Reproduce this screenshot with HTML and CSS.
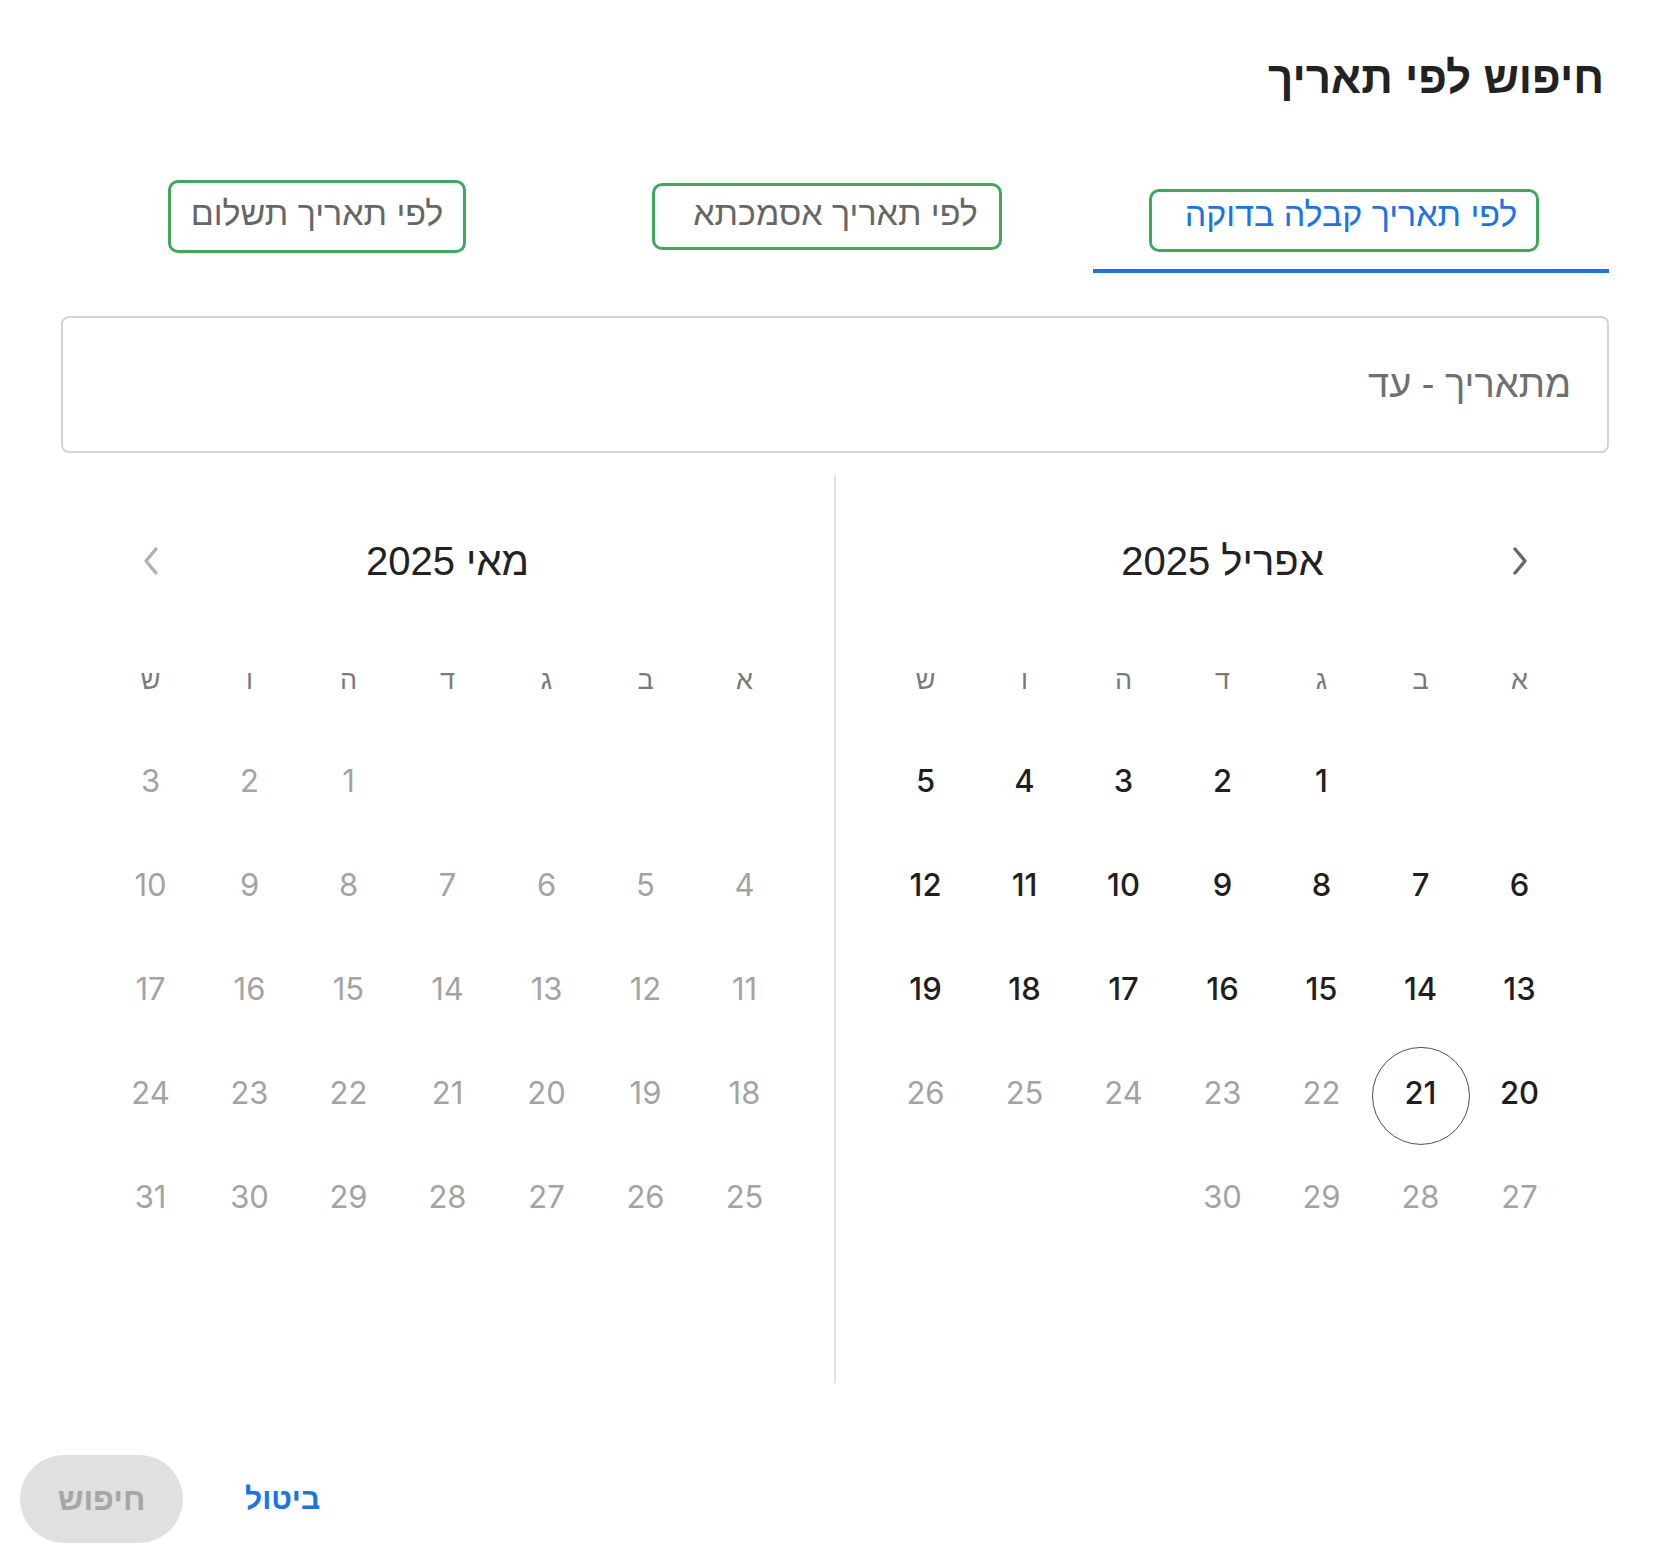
FILE: index.html
```html
<!DOCTYPE html>
<html lang="he" dir="rtl">
<head>
  <meta charset="UTF-8">
  <title>חיפוש לפי תאריך</title>
  <link rel="stylesheet" href="styles.css">
</head>
<body>
  <main class="dialog">
    <h1 class="title">חיפוש לפי תאריך</h1>

    <div class="tabs">
      <div class="tab active"><span class="mark mark-receipt">לפי תאריך קבלה בדוקה</span></div>
      <div class="tab"><span class="mark mark-ref">לפי תאריך אסמכתא</span></div>
      <div class="tab"><span class="mark mark-pay">לפי תאריך תשלום</span></div>
    </div>

    <div class="range-input">מתאריך - עד</div>

    <div class="calendars">
      <!-- אפריל -->
      <section class="month">
        <div class="month-head">
          <button class="nav">
            <svg width="18" height="30" viewBox="0 0 18 30"><polyline points="4,3 14,15 4,27" fill="none" stroke="#686868" stroke-width="3.4" stroke-linecap="round" stroke-linejoin="round"/></svg>
          </button>
          <div class="month-name">אפריל 2025</div>
          <span></span>
        </div>
        <div class="weekdays">
          <span>א</span><span>ב</span><span>ג</span><span>ד</span><span>ה</span><span>ו</span><span>ש</span>
        </div>
        <div class="days">
          <span></span><span></span><span class="on">1</span><span class="on">2</span><span class="on">3</span><span class="on">4</span><span class="on">5</span>
          <span class="on">6</span><span class="on">7</span><span class="on">8</span><span class="on">9</span><span class="on">10</span><span class="on">11</span><span class="on">12</span>
          <span class="on">13</span><span class="on">14</span><span class="on">15</span><span class="on">16</span><span class="on">17</span><span class="on">18</span><span class="on">19</span>
          <span class="on">20</span><span class="on today">21</span><span>22</span><span>23</span><span>24</span><span>25</span><span>26</span>
          <span>27</span><span>28</span><span>29</span><span>30</span><span></span><span></span><span></span>
        </div>
      </section>

      <!-- מאי -->
      <section class="month">
        <div class="month-head">
          <span></span>
          <div class="month-name">מאי 2025</div>
          <button class="nav">
            <svg width="18" height="30" viewBox="0 0 18 30"><polyline points="14,3 4,15 14,27" fill="none" stroke="#b0b0b0" stroke-width="3.4" stroke-linecap="round" stroke-linejoin="round"/></svg>
          </button>
        </div>
        <div class="weekdays">
          <span>א</span><span>ב</span><span>ג</span><span>ד</span><span>ה</span><span>ו</span><span>ש</span>
        </div>
        <div class="days">
          <span></span><span></span><span></span><span></span><span>1</span><span>2</span><span>3</span>
          <span>4</span><span>5</span><span>6</span><span>7</span><span>8</span><span>9</span><span>10</span>
          <span>11</span><span>12</span><span>13</span><span>14</span><span>15</span><span>16</span><span>17</span>
          <span>18</span><span>19</span><span>20</span><span>21</span><span>22</span><span>23</span><span>24</span>
          <span>25</span><span>26</span><span>27</span><span>28</span><span>29</span><span>30</span><span>31</span>
        </div>
      </section>
    </div>
  </main>

  <footer class="actions">
    <button class="btn-cancel">ביטול</button>
    <button class="btn-search" disabled>חיפוש</button>
  </footer>
</body>
</html>
```

FILE: styles.css
```css
* {
  box-sizing: border-box;
}

body {
  margin: 0;
  background: #fff;
  color: #222;
  font-family: "Liberation Sans", Arial, sans-serif;
}

.dialog {
  padding: 0 57px 0 61px;
}

.title {
  margin: 52px 5px 0 0;
  font-size: 44px;
  line-height: 52px;
  font-weight: bold;
  color: #222;
}

/* tabs */
.tabs {
  display: flex;
  margin-top: 56px;
}

.tab {
  flex: 1;
  height: 113px;
  display: flex;
  align-items: center;
  justify-content: center;
  border-bottom: 4px solid transparent;
  font-size: 34px;
  color: #666;
  cursor: pointer;
}

.tab.active {
  color: #1a73e8;
  border-bottom-color: #1a73e8;
}

/* green highlight frames around the tab labels */
.mark {
  border: 3px solid #3da95c;
  border-radius: 10px;
  line-height: 38px;
}

.mark-receipt {
  padding: 3px 19px 16px 33px;
  transform: translate(-7px, 6px);
}

.mark-ref {
  padding: 8px 21px 15px 38px;
  transform: translate(-8px, 2px);
}

.mark-pay {
  padding: 11px 20px 18px 20px;
  transform: translate(-2px, 2px);
}

/* input */
.range-input {
  margin-top: 43px;
  height: 137px;
  border: 2px solid #d4d4d4;
  border-radius: 8px;
  padding: 0 36px;
  display: flex;
  align-items: center;
  font-size: 38px;
  color: #6f6f6f;
}

/* calendars */
.calendars {
  display: flex;
  margin-top: 22px;
  height: 908px;
}

.month {
  flex: 1;
  padding: 40px 40px 0;
}

.month + .month {
  border-right: 2px solid #e2e2e2;
}

.month-head {
  display: grid;
  grid-template-columns: 99px 1fr 99px;
  align-items: center;
  height: 92px;
}

.month-name {
  text-align: center;
  font-size: 40px;
  color: #222;
}

.nav {
  background: none;
  border: none;
  padding: 0;
  height: 40px;
  display: flex;
  align-items: center;
  justify-content: center;
  cursor: pointer;
}

.weekdays, .days {
  display: grid;
  grid-template-columns: repeat(7, 1fr);
}

.weekdays {
  margin-top: 25px;
}

.weekdays span {
  height: 96px;
  display: flex;
  align-items: center;
  justify-content: center;
  font-size: 27px;
  color: #7a7a7a;
}

.days span {
  height: 104px;
  display: flex;
  align-items: center;
  justify-content: center;
  font-family: Inter, "Liberation Sans", sans-serif;
  font-size: 31px;
  color: #a3a3a3;
}

.days span.on {
  color: #1f1f1f;
  font-weight: 500;
}

.days span.today {
  position: relative;
}

.days span.today::after {
  content: "";
  position: absolute;
  width: 96px;
  height: 96px;
  left: 50%;
  top: 50%;
  transform: translate(-50%, -46%);
  border: 1.5px solid #505050;
  border-radius: 50%;
}

/* footer */
.actions {
  display: flex;
  justify-content: flex-end;
  align-items: center;
  gap: 56px;
  padding: 72px 0 0 20px;
}

.actions button {
  font-family: "Liberation Sans", Arial, sans-serif;
  font-weight: bold;
  border: none;
}

.btn-cancel {
  background: none;
  color: #1a73e8;
  font-size: 30px;
  padding: 0 6px;
  cursor: pointer;
}

.btn-search {
  width: 163px;
  height: 88px;
  border-radius: 44px;
  background: #e0e0e0;
  color: #a6a6a6;
  font-size: 32px;
}
```
